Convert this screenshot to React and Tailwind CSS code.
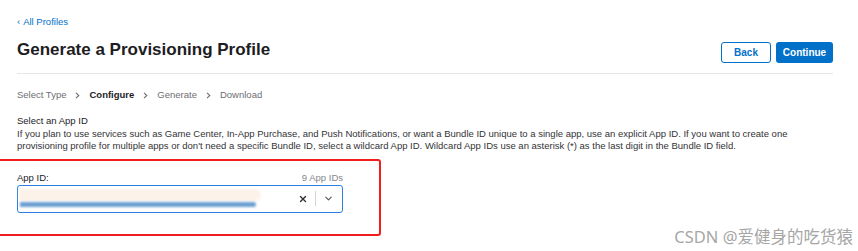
import React from "react";
import { X, ChevronDown } from "lucide-react";

function Crumb({ children, active }) {
  return (
    <span className={active ? "font-bold text-[#1d1d1f]" : "text-[#6e6e73]"}>{children}</span>
  );
}

function Sep() {
  return (
    <svg width="5" height="7" viewBox="0 0 5 7" className="mx-[9px]">
      <path d="M1 0.8 L3.8 3.5 L1 6.2" fill="none" stroke="#6e6e73" strokeWidth="1.1" />
    </svg>
  );
}

export default function App() {
  return (
    <div
      className="relative w-[858px] h-[251px] overflow-hidden bg-white pl-[17px] pt-[16px]"
      style={{ fontFamily: '"Liberation Sans", Arial, sans-serif' }}
    >
      <div className="w-[816px]">
        {/* back link */}
        <a className="flex items-center text-[9.5px] leading-[12px] text-[#0070c9]">
          <span className="mr-[3px]">‹</span>All Profiles
        </a>

        {/* header */}
        <div className="mt-[11px] flex items-start justify-between">
          <h1 className="text-[17px] leading-[22px] font-bold text-[#1d1d1f]">
            Generate a Provisioning Profile
          </h1>
          <div className="mt-[3px] flex gap-[5px]">
            <button className="h-[21px] w-[50px] rounded-[3px] border border-[#0070c9] bg-white text-[10px] font-bold text-[#0070c9]">
              Back
            </button>
            <button className="h-[21px] w-[57px] rounded-[3px] bg-[#0070c9] text-[10px] font-bold text-white">
              Continue
            </button>
          </div>
        </div>
        <div className="mt-[10px] h-px bg-[#e6e6e6]" />

        {/* steps */}
        <div className="mt-[15px] flex items-center text-[9.5px] leading-[12px]">
          <Crumb>Select Type</Crumb>
          <Sep />
          <Crumb active>Configure</Crumb>
          <Sep />
          <Crumb>Generate</Crumb>
          <Sep />
          <Crumb>Download</Crumb>
        </div>

        {/* description */}
        <div className="mt-[14px] text-[9.5px] leading-[12.5px] text-[#1d1d1f]">
          <div>Select an App ID</div>
          <p className="text-[#333336]">
            If you plan to use services such as Game Center, In-App Purchase, and Push Notifications, or want a Bundle ID unique to a single app, use an explicit App ID. If you want to create one
            <br />
            provisioning profile for multiple apps or don't need a specific Bundle ID, select a wildcard App ID. Wildcard App IDs use an asterisk (*) as the last digit in the Bundle ID field.
          </p>
        </div>
      </div>

      {/* app id field, outlined in red */}
      <div className="-ml-[20px] mt-[6px] w-[384px] h-[77px] rounded-[3px] border-2 border-[#f01e1e] pl-[18px] pt-[11px]">
        <div className="flex w-[326px] items-end justify-between text-[9.5px] leading-[12px]">
          <span className="text-[#1d1d1f]">App ID:</span>
          <span className="text-[#86868b]">9 App IDs</span>
        </div>
        <div className="mt-px flex h-[28px] w-[326px] items-center rounded-[3px] border-[1.5px] border-[#2a7fe0] bg-white">
          <div className="relative ml-[1px] h-[20px] w-[243px]">
            <div className="absolute left-0 top-0 h-[12px] w-[242px] rounded-r-full bg-[#fcf2ea] blur-[1px]" />
            <div className="absolute left-[1px] top-[13px] h-[5px] w-[236px] rounded-r-full bg-[#6d9fd3] blur-[1px]" />
          </div>
          <div className="ml-auto flex items-center">
            <X size={10} strokeWidth={3.2} className="text-[#333]" />
            <div className="mx-[7px] h-[15px] w-px bg-[#d2d2d7]" />
            <ChevronDown size={11} strokeWidth={2.4} className="mr-[8px] text-[#555]" />
          </div>
        </div>
      </div>

      {/* watermark */}
      <div
        className="absolute right-[5px] top-[226px] text-[16.5px] leading-[22px] text-[#a6a6a6]"
        style={{ fontFamily: '"Noto Sans", "Noto Sans CJK SC", sans-serif' }}
      >
        CSDN @爱健身的吃货猿
      </div>
    </div>
  );
}
